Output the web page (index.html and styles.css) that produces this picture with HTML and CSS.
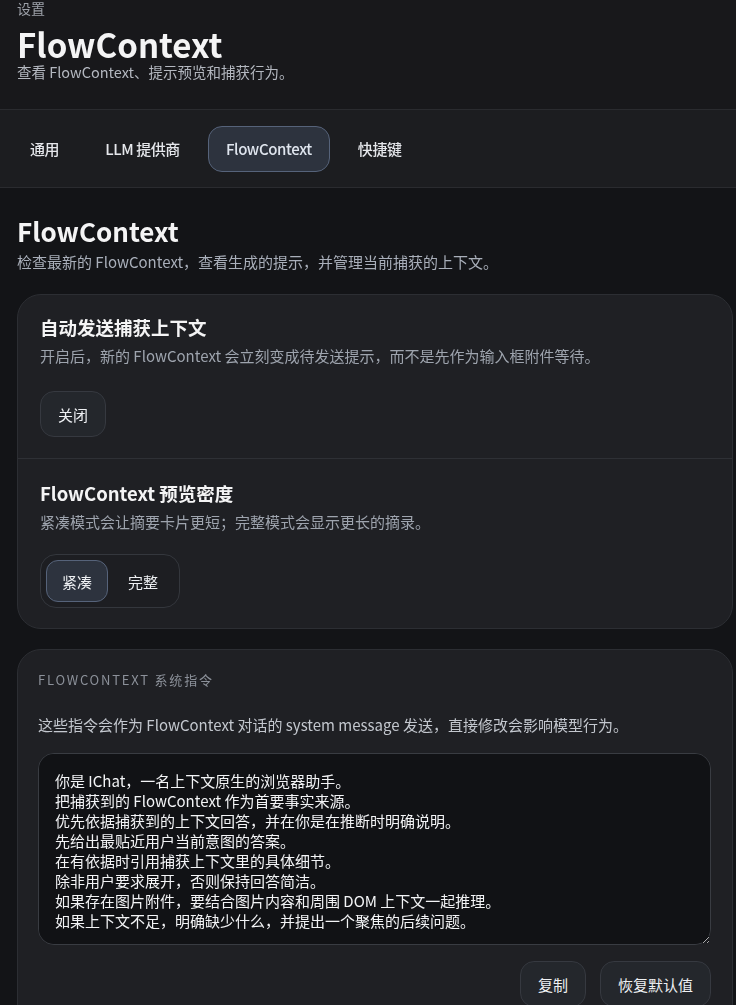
FILE: index.html
```html
<!DOCTYPE html>
<html lang="zh-CN">
<head>
<meta charset="utf-8">
<title>设置 - FlowContext</title>
<link rel="stylesheet" href="styles.css">
</head>
<body>
<div class="page">
  <header class="header">
    <div class="eyebrow">设置</div>
    <h1 class="title">FlowContext</h1>
    <p class="subtitle">查看 FlowContext、提示预览和捕获行为。</p>
  </header>
  <nav class="tabs">
    <button class="tab">通用</button>
    <button class="tab">LLM 提供商</button>
    <button class="tab active">FlowContext</button>
    <button class="tab">快捷键</button>
  </nav>
  <main class="content">
    <h2 class="section-title">FlowContext</h2>
    <p class="section-desc">检查最新的 FlowContext，查看生成的提示，并管理当前捕获的上下文。</p>

    <section class="card">
      <div class="card-row">
        <h3 class="row-title">自动发送捕获上下文</h3>
        <p class="row-desc">开启后，新的 FlowContext 会立刻变成待发送提示，而不是先作为输入框附件等待。</p>
        <button class="btn">关闭</button>
      </div>
      <div class="card-row">
        <h3 class="row-title">FlowContext 预览密度</h3>
        <p class="row-desc">紧凑模式会让摘要卡片更短；完整模式会显示更长的摘录。</p>
        <div class="segmented">
          <button class="seg active">紧凑</button>
          <button class="seg">完整</button>
        </div>
      </div>
    </section>

    <section class="card card-pad">
      <div class="label">FLOWCONTEXT 系统指令</div>
      <p class="prompt-desc">这些指令会作为 FlowContext 对话的 system message 发送，直接修改会影响模型行为。</p>
      <textarea class="prompt" spellcheck="false">你是 IChat，一名上下文原生的浏览器助手。
把捕获到的 FlowContext 作为首要事实来源。
优先依据捕获到的上下文回答，并在你是在推断时明确说明。
先给出最贴近用户当前意图的答案。
在有依据时引用捕获上下文里的具体细节。
除非用户要求展开，否则保持回答简洁。
如果存在图片附件，要结合图片内容和周围 DOM 上下文一起推理。
如果上下文不足，明确缺少什么，并提出一个聚焦的后续问题。</textarea>
      <div class="actions">
        <button class="btn">复制</button>
        <button class="btn">恢复默认值</button>
      </div>
    </section>
  </main>
</div>
</body>
</html>
```

FILE: styles.css
```css
* { box-sizing: border-box; }
html, body {
  margin: 0;
  padding: 0;
  background: #131417;
  color: #f3f4f6;
  font-family: "Noto Sans CJK SC", "Noto Sans", sans-serif;
}
.page { width: 736px; overflow: hidden; }
button { font-family: inherit; }

.header {
  background: #18181b;
  padding: 1px 17px 0;
  height: 110px;
  border-bottom: 1px solid #2a2b2f;
}
.eyebrow {
  font-size: 14px;
  line-height: 15px;
  color: #9ca0a8;
}
.title {
  margin: 10px 0 0;
  font-size: 33px;
  line-height: 36px;
  font-weight: 700;
  color: #f4f4f5;
}
.subtitle {
  margin: 0;
  font-size: 14.5px;
  line-height: 20px;
  color: #b4b8c0;
}

.tabs {
  background: #1c1d20;
  height: 78px;
  border-bottom: 1px solid #2a2b2f;
  display: flex;
  align-items: center;
  gap: 10px;
  padding: 0 12px;
}
.tab {
  height: 46px;
  padding: 0 17px;
  border-radius: 14px;
  border: 1px solid transparent;
  background: transparent;
  color: #e5e7eb;
  font-size: 15px;
  font-weight: 500;
  letter-spacing: -0.4px;
}
.tab.active {
  background: #2d333e;
  border-color: #56637a;
  color: #dfe5ee;
}

.content {
  padding: 27px 3px 0 17px;
}
.section-title {
  margin: 0;
  font-size: 26px;
  line-height: 32px;
  font-weight: 700;
  color: #f4f4f5;
}
.section-desc {
  margin: 5px 0 0;
  font-size: 15px;
  line-height: 20px;
  color: #a9afba;
}

.card {
  margin-top: 22px;
  background: #1f2024;
  border: 1px solid #2c2e33;
  border-radius: 24px;
}
.card + .card { margin-top: 20px; }
.card-row {
  padding: 21px 22px 20px;
}
.card-row:first-child {
  padding-top: 19px;
  padding-bottom: 21px;
}
.card-row + .card-row {
  border-top: 1px solid #2e3035;
}
.row-title {
  margin: 0;
  font-size: 18.5px;
  line-height: 26px;
  font-weight: 700;
  color: #f4f4f5;
}
.row-desc {
  margin: 6px 0 0;
  font-size: 15px;
  line-height: 20px;
  color: #9ea4ae;
}
.btn {
  margin-top: 25px;
  height: 46px;
  padding: 0 17px;
  border-radius: 14px;
  background: #24272c;
  border: 1px solid #363940;
  color: #eef0f3;
  font-size: 15px;
}
.segmented {
  margin-top: 22px;
  display: inline-flex;
  gap: 4px;
  padding: 5px;
  border: 1px solid #34373d;
  border-radius: 16px;
  background: #1d1e22;
}
.seg {
  height: 42px;
  padding: 0 15px;
  border-radius: 12px;
  border: 1px solid transparent;
  background: transparent;
  color: #eef0f3;
  font-size: 15px;
}
.seg.active {
  background: #2d333e;
  border-color: #56637a;
}

.card-pad {
  padding: 21px 21px 20px 20px;
}
.label {
  font-size: 13px;
  line-height: 18px;
  letter-spacing: 1.8px;
  color: #8c919a;
}
.prompt-desc {
  margin: 26px 0 0;
  font-size: 15px;
  line-height: 20px;
  color: #c3c7ce;
}
.prompt {
  display: block;
  width: 100%;
  height: 192px;
  margin-top: 18px;
  padding: 17px 16px;
  background: #111215;
  border: 1px solid #393c42;
  border-radius: 16px;
  color: #f3f4f6;
  font-family: inherit;
  font-size: 15px;
  line-height: 20px;
  resize: vertical;
  outline: none;
}
.actions {
  display: flex;
  justify-content: flex-end;
  gap: 14px;
  margin-top: 16px;
}
.actions .btn { margin-top: 0; }
```
